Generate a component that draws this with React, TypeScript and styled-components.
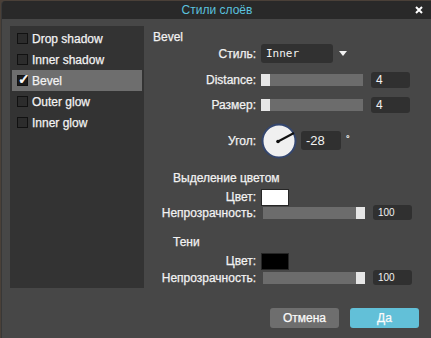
import React, { ReactElement } from "react";
import styled, { createGlobalStyle } from "styled-components";

const GlobalStyle = createGlobalStyle`
  html, body {
    margin: 0;
    padding: 0;
    background: #4a4038;
    font-family: "Liberation Sans", Arial, sans-serif;
  }
`;

const effects = [
  { name: "Drop shadow", on: false },
  { name: "Inner shadow", on: false },
  { name: "Bevel", on: true },
  { name: "Outer glow", on: false },
  { name: "Inner glow", on: false },
];

export default function App(): ReactElement {
  return (
    <>
      <GlobalStyle />
      <Dialog>
        <TitleBar>
          <Title>Стили слоёв</Title>
          <Close>
            <svg width="8" height="8" viewBox="0 0 8 8">
              <path d="M1 1L7 7M7 1L1 7" stroke="#fff" strokeWidth="2" />
            </svg>
          </Close>
        </TitleBar>

        <Content>
          <EffectList>
            {effects.map((e) => (
              <EffectRow key={e.name} selected={e.on}>
                <Check checked={e.on}>{e.on && <Tick>✓</Tick>}</Check>
                {e.name}
              </EffectRow>
            ))}
          </EffectList>

          <Form>
            <Heading top={4}>Bevel</Heading>
            <Row top={0} h={19}>
              <Label>Стиль:</Label>
              <Select>Inner</Select>
              <Arrow />
            </Row>
            <Row top={9} h={16}>
              <Label>Distance:</Label>
              <Slider w={102}>
                <Thumb />
              </Slider>
              <NumBox w={39} h={16}>4</NumBox>
            </Row>
            <Row top={9} h={16}>
              <Label>Размер:</Label>
              <Slider w={102}>
                <Thumb />
              </Slider>
              <NumBox w={39} h={16}>4</NumBox>
            </Row>
            <Row top={10} h={35}>
              <Label>Угол:</Label>
              <svg width="36" height="36" viewBox="0 0 36 36">
                <circle cx="18" cy="18" r="16.5" fill="#f0f0f0" stroke="#34466e" strokeWidth="2" />
                <line x1="17" y1="18.5" x2="33" y2="10" stroke="#111" strokeWidth="2" />
                <circle cx="17" cy="18.5" r="1.8" fill="#111" />
              </svg>
              <NumBox w={40} h={19} big>
                -28
              </NumBox>
              <Degree>°</Degree>
            </Row>

            <Heading top={13} indent={20}>
              Выделение цветом
            </Heading>
            <Row top={4} h={16}>
              <Label>Цвет:</Label>
              <Swatch color="#ffffff" />
            </Row>
            <Row top={0} h={15}>
              <Label>Непрозрачность:</Label>
              <Slider w={102} shift={2}>
                <Thumb end />
              </Slider>
              <NumBox w={39} h={15} small>
                100
              </NumBox>
            </Row>

            <Heading top={15} indent={20}>
              Тени
            </Heading>
            <Row top={4} h={16}>
              <Label>Цвет:</Label>
              <Swatch color="#000000" />
            </Row>
            <Row top={1} h={15}>
              <Label>Непрозрачность:</Label>
              <Slider w={102} shift={2}>
                <Thumb end />
              </Slider>
              <NumBox w={39} h={15} small>
                100
              </NumBox>
            </Row>
          </Form>
        </Content>

        <Footer>
          <Button>Отмена</Button>
          <Button primary>Да</Button>
        </Footer>
      </Dialog>
    </>
  );
}

const Dialog = styled.div`
  margin: 1px 0 0 1px;
  width: 430px;
  height: 337px;
  background: #474747;
  border-left: 1px solid #383838;
  border-radius: 4px 0 0 0;
  overflow: hidden;
  display: flex;
  flex-direction: column;
  box-sizing: border-box;
  color: #f2f2f2;
  -webkit-text-stroke: 0.25px #f2f2f2;
`;

const TitleBar = styled.div`
  height: 18px;
  background: #292929;
  display: flex;
  align-items: center;
  justify-content: center;
  position: relative;
  flex-shrink: 0;
`;

const Title = styled.div`
  color: #5bc2df;
  -webkit-text-stroke: 0;
  font-size: 12px;
  margin-left: 1px;
`;

const Close = styled.div`
  position: absolute;
  right: 8px;
  top: 5px;
  width: 8px;
  height: 8px;
  display: flex;
`;

const Content = styled.div`
  display: flex;
  padding: 7px 0 0 8px;
  gap: 9px;
`;

const EffectList = styled.div`
  width: 134px;
  height: 262px;
  background: #333333;
  padding-top: 2px;
  box-sizing: border-box;
`;

const EffectRow = styled.div<{ selected?: boolean }>`
  height: 21px;
  margin: 0 2px;
  padding-left: 5px;
  display: flex;
  align-items: center;
  gap: 4px;
  font-size: 12px;
  background: ${(p) => (p.selected ? "#6e6e6e" : "transparent")};
`;

const Check = styled.div<{ checked?: boolean }>`
  width: 11px;
  height: 11px;
  box-sizing: border-box;
  border: 1px solid #111;
  background: ${(p) => (p.checked ? "#1a1a1a" : "#2c2c2c")};
  position: relative;
`;

const Tick = styled.span`
  position: absolute;
  left: 0px;
  top: -5px;
  color: #fff;
  -webkit-text-stroke: 0.6px #fff;
  font-family: "DejaVu Sans", sans-serif;
  font-size: 14px;
  font-weight: bold;
`;

const Form = styled.div`
  display: flex;
  flex-direction: column;
`;

const Heading = styled.div<{ top: number; indent?: number }>`
  margin-top: ${(p) => p.top}px;
  padding-left: ${(p) => p.indent || 0}px;
  height: 14px;
  line-height: 14px;
  font-size: 12px;
`;

const Row = styled.div<{ top: number; h: number }>`
  margin-top: ${(p) => p.top}px;
  height: ${(p) => p.h}px;
  display: flex;
  align-items: center;
`;

const Label = styled.div`
  width: 103px;
  padding-right: 5px;
  text-align: right;
  font-size: 12px;
  flex-shrink: 0;
`;

const Select = styled.div`
  width: 72px;
  height: 19px;
  line-height: 19px;
  padding-left: 5px;
  box-sizing: border-box;
  background: #313131;
  border-radius: 3px;
  font-family: "DejaVu Sans Mono", monospace;
  font-size: 11px;
  -webkit-text-stroke: 0;
`;

const Arrow = styled.div`
  margin-left: 6px;
  width: 0;
  height: 0;
  border-left: 4px solid transparent;
  border-right: 4px solid transparent;
  border-top: 5px solid #f2f2f2;
`;

const Slider = styled.div<{ w: number; shift?: number }>`
  width: ${(p) => p.w}px;
  height: 12px;
  margin-left: ${(p) => p.shift || 0}px;
  background: #6c6c6c;
  display: flex;
  margin-right: 8px;
`;

const Thumb = styled.div<{ end?: boolean }>`
  width: 9px;
  height: 12px;
  background: #e6e6e6;
  margin-left: ${(p) => (p.end ? "auto" : "0")};
`;

const NumBox = styled.div<{ w: number; h: number; big?: boolean; small?: boolean }>`
  width: ${(p) => p.w}px;
  height: ${(p) => p.h}px;
  line-height: ${(p) => p.h}px;
  box-sizing: border-box;
  padding-left: 5px;
  background: #303030;
  border-radius: 3px;
  font-size: ${(p) => (p.big ? 13 : p.small ? 10 : 12)}px;
  margin-left: ${(p) => (p.big ? 4 : 0)}px;
  -webkit-text-stroke: 0;
`;

const Degree = styled.div`
  align-self: flex-start;
  margin: 11px 0 0 5px;
  font-size: 9px;
`;

const Swatch = styled.div<{ color: string }>`
  width: 28px;
  height: 17px;
  box-sizing: border-box;
  border: 1px solid #262626;
  background: ${(p) => p.color};
`;

const Footer = styled.div`
  display: flex;
  justify-content: flex-end;
  gap: 11px;
  margin-top: 20px;
  padding-right: 12px;
`;

const Button = styled.div<{ primary?: boolean }>`
  width: 69px;
  height: 20px;
  line-height: 20px;
  text-align: center;
  border-radius: 3px;
  font-size: 12px;
  color: #fff;
  background: ${(p) => (p.primary ? "#62c0d8" : "#6e6e6e")};
`;
